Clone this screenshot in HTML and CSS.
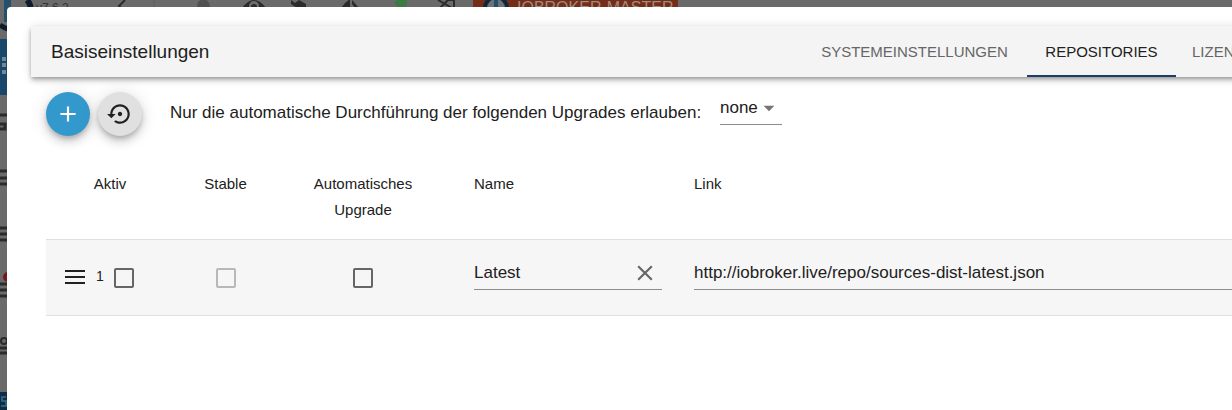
FILE: index.html
```html
<!DOCTYPE html>
<html lang="de">

<head>
    <meta charset="utf-8">
    <title>Basiseinstellungen</title>
    <link rel="stylesheet" href="styles.css">
</head>

<body>
    <!-- dimmed app behind the dialog -->
    <svg class="app" width="1232" height="410" aria-hidden="true">
        <rect x="4" y="0" width="7" height="22" fill="#23506b" />
        <path d="M0 25q4 3 8 4" stroke="#0d1b2b" stroke-width="5" fill="none" />
        <path d="M27 0q4 4 4 12" stroke="#0d1b2b" stroke-width="6" fill="none" />
        <text x="36" y="12" class="app-version">v7.6.2</text>
        <path d="M125 0l-6 6 6 6" stroke="#2b2b2b" stroke-width="2" fill="none" />
        <path d="M154 0v8" stroke="#5c5c5c" />
        <path d="M197 8q0-8 6-9q7 1 7 9z" fill="#505050" />
        <path d="M242 8q12-16 24 0z" fill="#2b2b2b" />
        <circle cx="254" cy="6" r="5" fill="#6e6e6e" />
        <circle cx="254" cy="7" r="3" fill="#2b2b2b" />
        <path d="M291 0l4 3 4-3 7 4v4h-9l-6-4z" fill="#2b2b2b" />
        <path d="M341 8l4-5 5-4v9zM352 0l7 8h-4l-3-4z" fill="#2b2b2b" />
        <path d="M394 2l4-2h9v4l-2 4h-7z" fill="#3d7a43" />
        <path d="M438 0l14 8M440 8l8-8 6 0v8" stroke="#2b2b2b" stroke-width="2" fill="none" />
        <rect x="473" y="0" width="205" height="20" fill="#742e17" />
        <circle cx="496" cy="8" r="11" fill="#6e7275" stroke="#10263b" stroke-width="4" />
        <path d="M496 0v8" stroke="#23506b" stroke-width="4" />
        <text x="517" y="13" class="app-host">IOBROKER-MASTER</text>

        <rect x="0" y="39" width="10" height="56" fill="#18476a" />
        <path d="M2 57h4v4H2zm0 6h4v4H2zm0 7h4v4H2z" fill="#6f8798" />
        <path d="M0 115h8M0 124h5v5H0M0 171h8M0 178h8M0 184h8M0 228h8M0 234h8M0 240h8M0 284h8M0 290h8M0 296h8M0 348h8M0 353h8" stroke="#2b2b2b" stroke-width="3" fill="none" />
        <circle cx="8" cy="277" r="5" fill="#7a1522" />
        <circle cx="4" cy="341" r="3" stroke="#2b2b2b" stroke-width="2" fill="none" />
        <rect x="0" y="392" width="10" height="18" fill="#0f2c45" />
        <path d="M6 397H2v4h4v5H1" stroke="#2b5f80" stroke-width="2" fill="none" />
    </svg>

    <main class="dialog">
        <header class="toolbar">
            <h1 class="toolbar-title">Basiseinstellungen</h1>
            <nav class="tabs">
                <button class="tab tab-system">SYSTEMEINSTELLUNGEN</button>
                <button class="tab tab-repositories tab-active">REPOSITORIES</button>
                <button class="tab">LIZENZEN</button>
            </nav>
        </header>

        <section class="content">
            <div class="controls">
                <button class="fab fab-primary" aria-label="Hinzufügen">
                    <svg width="26" height="26" viewBox="0 0 24 24">
                        <path d="M19 13h-6v6h-2v-6H5v-2h6V5h2v6h6v2z" fill="currentColor" />
                    </svg>
                </button>
                <button class="fab" aria-label="Zurücksetzen">
                    <svg width="26" height="26" viewBox="0 0 24 24">
                        <path d="M14 12c0-1.100-.9-2-2-2s-2 .9-2 2 .9 2 2 2 2-.9 2-2zm-2-9c-4.970 0-9 4.030-9 9H0l4 4 4-4H5c0-3.870 3.130-7 7-7s7 3.130 7 7-3.130 7-7 7c-1.510 0-2.910-.49-4.060-1.300l-1.420 1.440C8.040 20.300 9.940 21 12 21c4.970 0 9-4.030 9-9s-4.030-9-9-9z" fill="currentColor" />
                    </svg>
                </button>
                <label class="policy-label" for="policy">Nur die automatische Durchführung der folgenden Upgrades erlauben:</label>
                <span class="select">
                    <select id="policy">
                        <option>none</option>
                    </select>
                    <svg width="26" height="26" viewBox="0 0 24 24">
                        <path d="M7 10l5 5 5-5z" fill="currentColor" />
                    </svg>
                </span>
            </div>

            <table class="repos">
                <thead>
                    <tr>
                        <th class="col-active">Aktiv</th>
                        <th class="col-stable">Stable</th>
                        <th class="col-auto">Automatisches Upgrade</th>
                        <th class="col-name">Name</th>
                        <th class="col-link">Link</th>
                    </tr>
                </thead>
                <tbody>
                    <tr>
                        <td>
                            <div class="active-cell">
                                <svg width="26" height="26" viewBox="0 0 26 26" aria-hidden="true">
                                    <path d="M3 6h20M3 12h20M3 18h20" stroke="currentColor" stroke-width="2" />
                                </svg>
                                <span class="index">1</span>
                                <input type="checkbox" aria-label="Aktiv">
                            </div>
                        </td>
                        <td><input type="checkbox" aria-label="Stable" disabled></td>
                        <td><input type="checkbox" aria-label="Automatisches Upgrade"></td>
                        <td class="text-cell">
                            <div class="field">
                                <input type="text" value="Latest" aria-label="Name">
                                <button class="clear" aria-label="Leeren">
                                    <svg width="26" height="26" viewBox="0 0 24 24">
                                        <path d="M19 6.410L17.590 5 12 10.590 6.410 5 5 6.410 10.590 12 5 17.590 6.410 19 12 13.410 17.590 19 19 17.590 13.410 12z" fill="currentColor" />
                                    </svg>
                                </button>
                            </div>
                        </td>
                        <td class="text-cell text-cell-last">
                            <div class="field">
                                <input type="text" value="http://iobroker.live/repo/sources-dist-latest.json" aria-label="Link">
                            </div>
                        </td>
                    </tr>
                </tbody>
            </table>
        </section>
    </main>
</body>

</html>
```
FILE: styles.css
```css
* {
    box-sizing: border-box;
}

body {
    margin: 0;
    min-height: 100vh;
    display: flex;
    overflow: hidden;
    background: #6a6a6a;
    color: #212121;
    font-family: "Liberation Sans", Arial, sans-serif;
    font-size: 17px;
}

button,
input,
select {
    margin: 0;
    padding: 0;
    border: none;
    background: transparent;
    color: inherit;
    font: inherit;
}

.app {
    position: absolute;
    top: 0;
    left: 0;
}

.app-version {
    font-size: 12px;
    fill: #333;
}

.app-host {
    font-size: 16px;
    fill: #a08a82;
}

.dialog {
    position: relative;
    flex: 1;
    min-width: 0;
    margin: 7px 0 0 7px;
    padding: 19px 0 0 24px;
    background: white;
    border-top-left-radius: 4px;
}

/* runs on past the right edge of the window */
.toolbar {
    display: flex;
    justify-content: space-between;
    height: 51px;
    margin-right: -70px;
    padding-left: 20px;
    background: #f4f4f4;
    box-shadow: 0 2px 4px -1px rgba(0, 0, 0, .3), 0 4px 5px rgba(0, 0, 0, .14), 0 1px 10px rgba(0, 0, 0, .12);
}

.toolbar-title {
    margin: 0;
    font-size: 19px;
    font-weight: normal;
    line-height: 51px;
}

.tabs {
    display: flex;
    width: 500px;
}

.tab {
    flex: none;
    padding: 2px 16px 0;
    border-bottom: 2px solid transparent;
    color: #666;
    font-size: 15px;
}

.tab-system {
    width: 225px;
}

.tab-repositories {
    width: 149px;
}

.tab-active {
    border-color: #1c3d66;
    color: #212121;
}

.content {
    padding: 15px 0 0 15px;
}

.controls {
    display: flex;
    align-items: center;
    gap: 8px;
    margin-bottom: 19px;
}

.fab {
    display: flex;
    align-items: center;
    justify-content: center;
    width: 44px;
    height: 44px;
    border-radius: 50%;
    background: #e0e0e0;
    box-shadow: 0 3px 5px -1px rgba(0, 0, 0, .2), 0 6px 10px rgba(0, 0, 0, .14), 0 1px 18px rgba(0, 0, 0, .12);
}

.fab-primary {
    background: #3399cc;
    color: white;
}

.policy-label {
    flex: 0 1 542px;
    margin-left: 20px;
    padding-bottom: 2px;
}

.select {
    display: grid;
    align-self: flex-start;
    align-items: center;
    width: 62px;
    height: 33px;
    border-bottom: 1px solid #8c8c8c;
}

.select select,
.select svg {
    grid-area: 1 / 1;
}

.select select {
    width: 100%;
    height: 100%;
    padding-bottom: 2px;
    appearance: none;
}

.select svg {
    justify-self: end;
    color: #757575;
    pointer-events: none;
}

.repos {
    width: 100%;
    table-layout: fixed;
    border-collapse: separate;
    border-spacing: 0;
    font-size: 15px;
}

.repos th {
    padding: 16px;
    border-bottom: 1px solid #e0e0e0;
    font-weight: normal;
    line-height: 26px;
    vertical-align: top;
}

.repos td {
    height: 76px;
    padding: 0;
    border-bottom: 1px solid #e0e0e0;
    background: #f6f6f6;
    text-align: center;
}

.col-active {
    width: 128px;
}

.col-stable {
    width: 103px;
}

.col-auto {
    width: 172px;
}

.col-name {
    width: 220px;
}

.repos .col-name,
.repos .col-link {
    padding-left: 25px;
    text-align: left;
}

.repos .text-cell {
    padding: 16px 7px 0 25px;
    vertical-align: top;
}

.repos .text-cell-last {
    padding-right: 0;
}

.active-cell {
    display: flex;
    align-items: center;
    gap: 8px;
    padding-left: 16px;
}

.index {
    padding: 0 2px 4px 0;
    font-size: 14px;
}

input[type="checkbox"] {
    display: block;
    width: 20px;
    height: 20px;
    margin: 0 auto;
    border: 2px solid #666;
    border-radius: 2px;
    appearance: none;
}

input[type="checkbox"]:disabled {
    border-color: #b8b8b8;
}

.active-cell input[type="checkbox"] {
    margin: 0;
}

.field {
    display: flex;
    align-items: center;
    height: 34px;
    border-bottom: 1px solid #8c8c8c;
    font-size: 17px;
}

.field input {
    flex: 1;
    min-width: 0;
    height: 100%;
}

.clear {
    display: flex;
    margin-right: 4px;
    color: #666;
}
```
